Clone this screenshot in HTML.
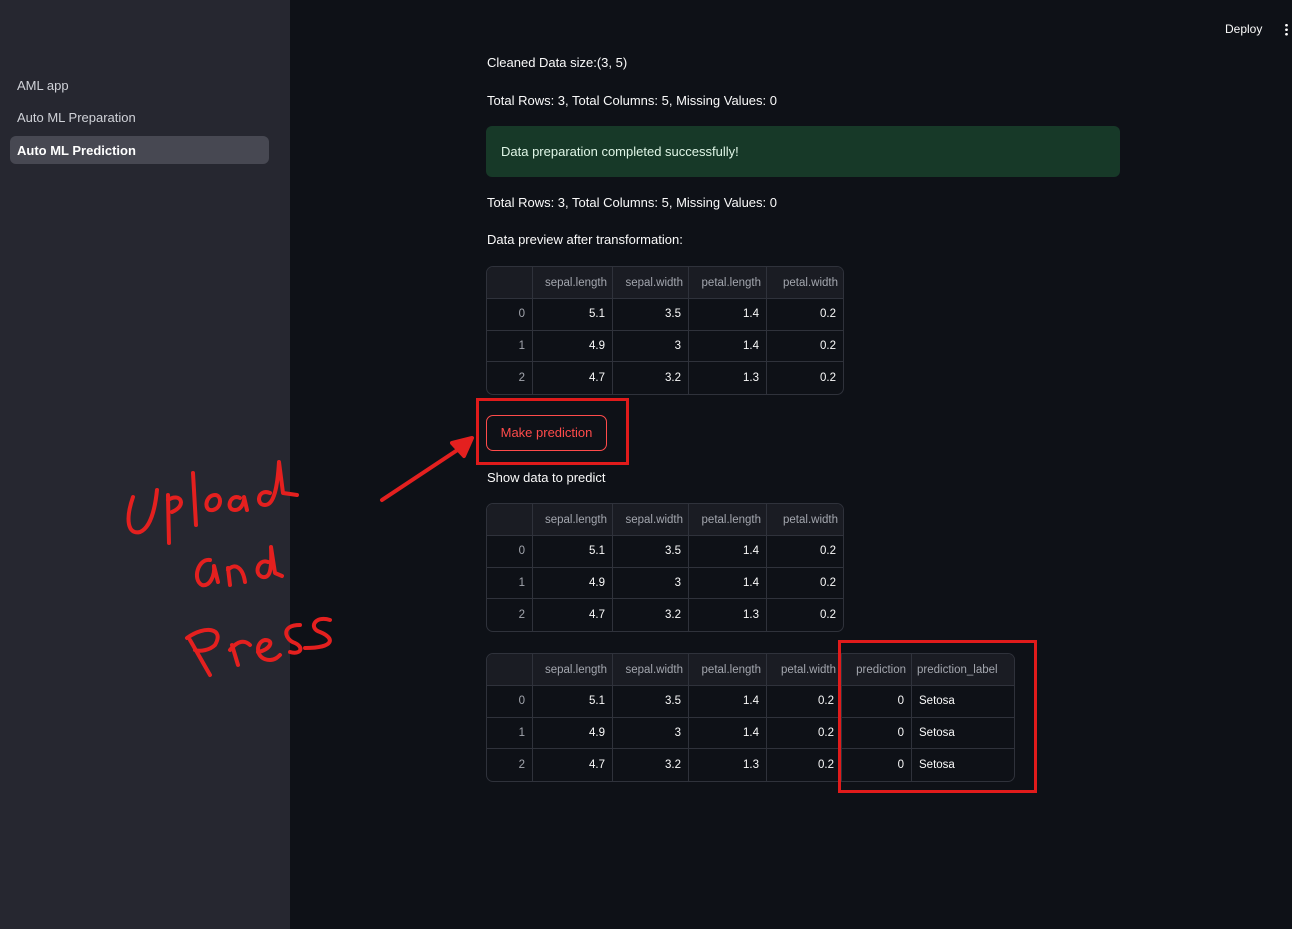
<!DOCTYPE html>
<html><head><meta charset="utf-8"><style>
*{margin:0;padding:0;box-sizing:border-box}
body{width:1292px;height:929px;background:#0e1117;font-family:"Liberation Sans",sans-serif;color:#fafafa;position:relative;overflow:hidden}
.sb{position:absolute;left:0;top:0;width:290px;height:929px;background:#262730}
.nav{position:absolute;left:17px;font-size:13px;color:#d0d2d8}
.sel{position:absolute;left:10px;top:136px;width:259px;height:28px;background:#474852;border-radius:6px}
.t{position:absolute;left:487px;font-size:13px;color:#fafafa;white-space:nowrap}
table{position:absolute;border-collapse:separate;border-spacing:0;border:1px solid #2f323b;border-radius:7px;font-size:11.5px;overflow:hidden;table-layout:fixed}
td,th{border-right:1px solid #2f323b;border-bottom:1px solid #2f323b;padding:0 7px;text-align:right;height:31.5px;color:#fafafa;white-space:nowrap;overflow:hidden}
th{font-weight:normal;color:#a3a6ae;background:#1a1c23;height:32px;padding:0 5px}
td.i{color:#a3a6ae}
tr:last-child td{border-bottom:none}
td:last-child,th:last-child{border-right:none}
td.l{text-align:left}
</style></head><body>
<div class="sb"></div>
<div class="nav" style="top:78px">AML app</div>
<div class="nav" style="top:110px">Auto ML Preparation</div>
<div class="sel"></div>
<div class="nav" style="top:143px;color:#fff;font-weight:bold">Auto ML Prediction</div>
<div style="position:absolute;left:1225px;top:22px;font-size:12px">Deploy</div>
<div style="position:absolute;left:1285px;top:23px;width:3px;height:13px;background:radial-gradient(circle,#fff 1.2px,transparent 1.5px) 0 0/3px 4.5px"></div>

<div class="t" style="top:55px">Cleaned Data size:(3, 5)</div>
<div class="t" style="top:93px">Total Rows: 3, Total Columns: 5, Missing Values: 0</div>
<div style="position:absolute;left:486px;top:126px;width:634px;height:51px;background:#173928;border-radius:6px"></div>
<div class="t" style="top:144px;left:501px;color:#dff5e6">Data preparation completed successfully!</div>
<div class="t" style="top:195px">Total Rows: 3, Total Columns: 5, Missing Values: 0</div>
<div class="t" style="top:232px">Data preview after transformation:</div>

<table style="left:486px;top:266px;width:356px">
<colgroup><col style="width:46px"><col style="width:80px"><col style="width:76px"><col style="width:78px"><col style="width:76px"></colgroup>
<tr><th></th><th>sepal.length</th><th>sepal.width</th><th>petal.length</th><th>petal.width</th></tr>
<tr><td class="i">0</td><td>5.1</td><td>3.5</td><td>1.4</td><td>0.2</td></tr>
<tr><td class="i">1</td><td>4.9</td><td>3</td><td>1.4</td><td>0.2</td></tr>
<tr><td class="i">2</td><td>4.7</td><td>3.2</td><td>1.3</td><td>0.2</td></tr>
</table>

<div style="position:absolute;left:486px;top:415px;width:121px;height:36px;border:1px solid #ff4b4b;border-radius:7px;color:#ff4b4b;font-size:13px;text-align:center;line-height:34px;background:#0e1117">Make prediction</div>
<div style="position:absolute;left:476px;top:398px;width:153px;height:67px;border:3px solid #e01b1b"></div>
<div class="t" style="top:470px">Show data to predict</div>

<table style="left:486px;top:503px;width:356px">
<colgroup><col style="width:46px"><col style="width:80px"><col style="width:76px"><col style="width:78px"><col style="width:76px"></colgroup>
<tr><th></th><th>sepal.length</th><th>sepal.width</th><th>petal.length</th><th>petal.width</th></tr>
<tr><td class="i">0</td><td>5.1</td><td>3.5</td><td>1.4</td><td>0.2</td></tr>
<tr><td class="i">1</td><td>4.9</td><td>3</td><td>1.4</td><td>0.2</td></tr>
<tr><td class="i">2</td><td>4.7</td><td>3.2</td><td>1.3</td><td>0.2</td></tr>
</table>

<table style="left:486px;top:653px;width:527px">
<colgroup><col style="width:46px"><col style="width:80px"><col style="width:76px"><col style="width:78px"><col style="width:75px"><col style="width:70px"><col style="width:102px"></colgroup>
<tr><th></th><th>sepal.length</th><th>sepal.width</th><th>petal.length</th><th>petal.width</th><th>prediction</th><th style="text-align:left">prediction_label</th></tr>
<tr><td class="i">0</td><td>5.1</td><td>3.5</td><td>1.4</td><td>0.2</td><td>0</td><td class="l">Setosa</td></tr>
<tr><td class="i">1</td><td>4.9</td><td>3</td><td>1.4</td><td>0.2</td><td>0</td><td class="l">Setosa</td></tr>
<tr><td class="i">2</td><td>4.7</td><td>3.2</td><td>1.3</td><td>0.2</td><td>0</td><td class="l">Setosa</td></tr>
</table>
<div style="position:absolute;left:838px;top:640px;width:199px;height:153px;border:3px solid #e01b1b"></div>

<svg style="position:absolute;left:0;top:0" width="1292" height="929" fill="none" stroke="#e4201f" stroke-width="4" stroke-linecap="round" stroke-linejoin="round">
<path d="M382 500 L468 443"/><path d="M472 438 L452 443 L464 456 Z" fill="#e4201f"/>
<path d="M133 497 C125 520 128 535 140 532 C150 528 155 510 157 490"/>
<path d="M168 495 L169 543 M168 500 C180 492 188 505 172 512"/>
<path d="M193 473 L196 525"/>
<path d="M215 495 C205 495 203 512 213 510 C222 508 222 495 215 495"/>
<path d="M240 498 C230 493 225 510 235 510 C242 510 245 500 244 497 L247 510"/>
<path d="M270 493 C258 488 255 505 265 505 C272 505 277 495 279 462 L283 493 L297 495"/>
<path d="M210 560 C198 558 192 580 202 585 C210 587 215 575 214 566 L218 582"/>
<path d="M228 568 L230 585 M228 570 C235 562 243 568 245 582"/>
<path d="M268 562 C258 558 253 575 263 577 C270 578 272 570 271 547 L275 573 L282 576"/>
<path d="M190 640 L210 675 M187 638 C205 625 225 628 215 645 C210 650 200 652 195 650"/>
<path d="M232 645 L238 665 M230 650 C238 640 245 640 250 645"/>
<path d="M258 652 C270 650 275 640 265 640 C255 642 255 660 270 660 C275 660 278 657 280 655"/>
<path d="M300 625 C280 625 285 640 295 643 C305 648 300 655 290 652"/>
<path d="M330 620 C315 615 308 628 320 632 C335 638 335 648 305 648"/>
</svg>
</body></html>
